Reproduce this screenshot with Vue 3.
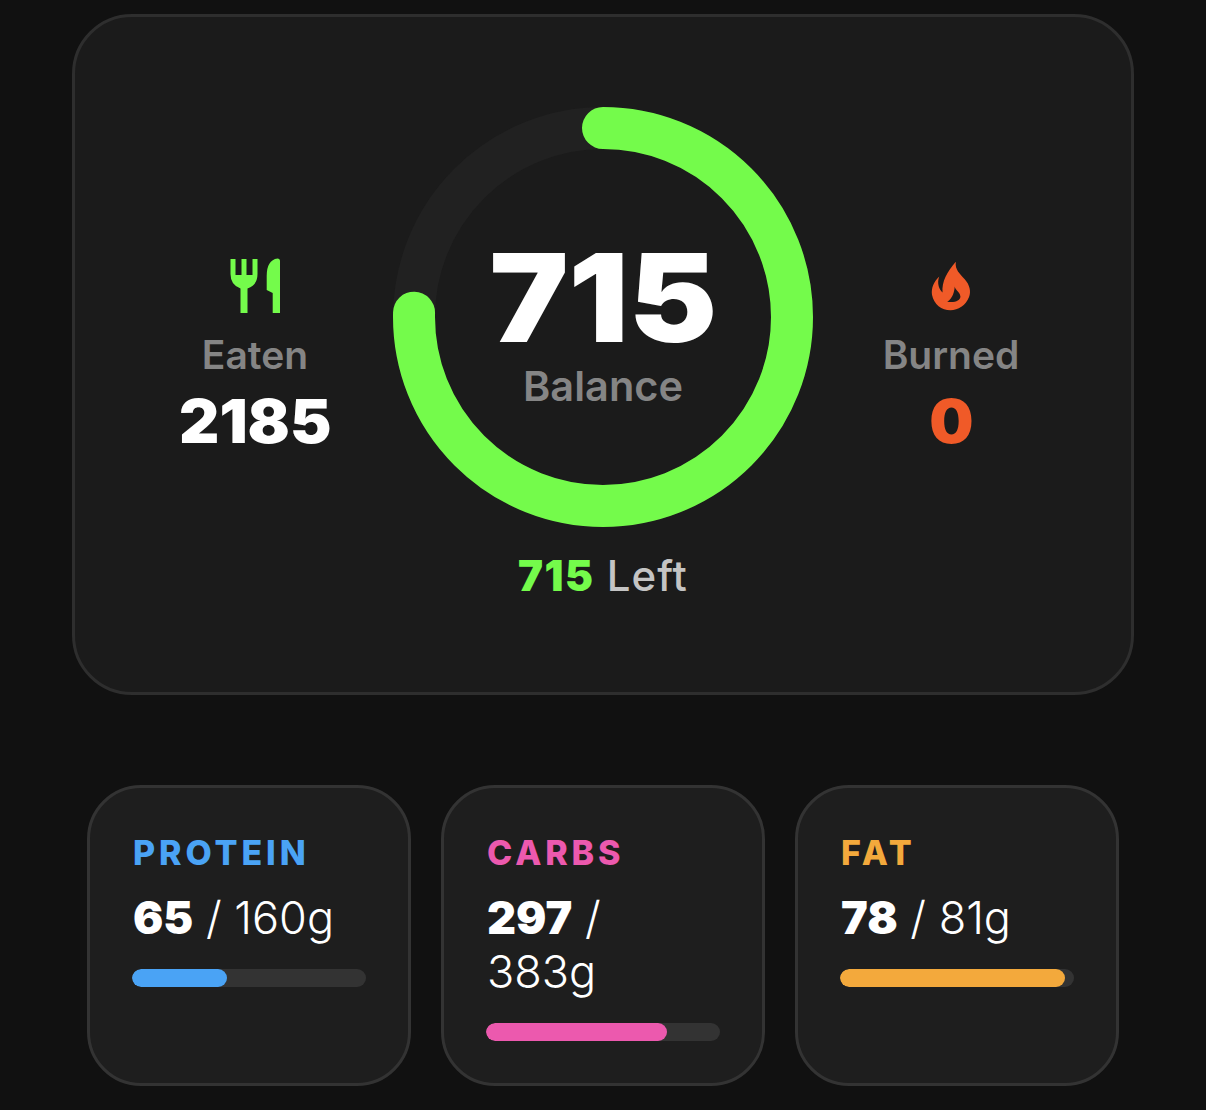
<template>
  <div class="page">
    <section class="summary">
      <div class="top-row">
        <div class="side">
          <div class="side-icon">
            <svg width="54" height="58" viewBox="228 257 54 58" fill="#74fb4b">
              <path d="M230.500 259H235.500V275H241.500V259H246.500V275H252.500V259H257.500V274Q257.500 285 247.500 288.500V313H240.500V288.500Q230.500 285 230.500 274Z" />
              <path d="M280 261Q280 258.500 277.500 258.500Q266.700 260 266.700 276V290L272.700 293V313H280Z" />
            </svg>
          </div>
          <div class="side-label">Eaten</div>
          <div class="side-value"><span>2185</span></div>
        </div>
        <div class="ring">
          <svg width="420" height="420" viewBox="0 0 420 420">
            <circle cx="210" cy="210" r="189" fill="none" stroke="#212121" stroke-width="42" />
            <circle
              cx="210" cy="210" r="189" fill="none" stroke="#74fb4b" stroke-width="42"
              stroke-linecap="round" transform="rotate(-90 210 210)"
              :stroke-dasharray="dash"
            />
          </svg>
          <div class="ring-text">
            <div class="balance"><span>715</span></div>
            <div class="balance-label">Balance</div>
          </div>
        </div>
        <div class="side">
          <div class="side-icon">
            <svg width="42" height="52" viewBox="210 60 127 157">
              <path fill="#f05a28" d="M288 65C285 90 300 100 315 118C330 135 335 155 328 172C318 198 295 212 272 212C245 212 222 195 216 165C213 145 222 125 238 110C230 130 238 150 248 158C245 125 262 95 288 65Z" />
              <path fill="#1b1b1b" d="M285 135C282 150 300 155 302 170C302 182 285 190 262 186C278 178 285 155 285 135Z" />
            </svg>
          </div>
          <div class="side-label">Burned</div>
          <div class="side-value burned"><span>0</span></div>
        </div>
      </div>
      <div class="left-line"><b>715</b> Left</div>
    </section>

    <section class="macros">
      <div v-for="m in macros" :key="m.name" class="macro">
        <div class="macro-name" :style="{ color: m.color }">{{ m.name }}</div>
        <div class="macro-value"><b>{{ m.value }}</b> / {{ m.goal }}g</div>
        <div class="bar">
          <div class="bar-fill" :style="{ width: (m.value / m.goal) * 100 + '%', background: m.color }"></div>
        </div>
      </div>
    </section>
  </div>
</template>

<script setup>
const circumference = 2 * Math.PI * 189
const dash = `${circumference * 0.7534} ${circumference}`

const macros = [
  { name: 'PROTEIN', value: 65, goal: 160, color: '#4aa3f5' },
  { name: 'CARBS', value: 297, goal: 383, color: '#ec59ae' },
  { name: 'FAT', value: 78, goal: 81, color: '#f3a93c' }
]
</script>

<style>
html,
body {
  background: #111111;
}
</style>

<style scoped>
.page {
  width: 1206px;
  height: 1110px;
  overflow: hidden;
  box-sizing: border-box;
  padding-top: 14px;
  background: #111111;
  font-family: Inter, "Liberation Sans", sans-serif;
  color: #fff;
}

.summary {
  box-sizing: border-box;
  width: 1062px;
  height: 681px;
  margin: 0 auto;
  padding: 90px 42px 0;
  background: #1b1b1b;
  border: 3px solid #2e2e2e;
  border-radius: 60px;
}

.top-row {
  display: flex;
  align-items: flex-start;
}

.side {
  flex: 1;
  display: flex;
  flex-direction: column;
  align-items: center;
  padding-top: 150px;
}

.side-icon {
  display: flex;
  align-items: center;
  justify-content: center;
  height: 58px;
}

.side-icon svg {
  display: block;
}

.side-label {
  margin-top: 18px;
  font-size: 39px;
  line-height: 44px;
  font-weight: 600;
  color: #858585;
}

.side-value {
  margin-top: 8px;
  font-size: 60px;
  line-height: 72px;
  font-weight: 900;
}

.side-value span {
  display: inline-block;
  transform: scaleX(1.04);
}

.burned {
  color: #f05a28;
}

.ring {
  position: relative;
  width: 420px;
  height: 420px;
}

.ring svg {
  display: block;
}

.ring-text {
  position: absolute;
  left: 0;
  right: 0;
  top: 129px;
  text-align: center;
}

.balance {
  font-size: 123px;
  line-height: 124px;
  font-weight: 900;
}

.balance span {
  display: inline-block;
  transform: scaleX(1.08);
}

.balance-label {
  margin-top: 1px;
  font-size: 41.5px;
  line-height: 50px;
  font-weight: 600;
  color: #858585;
}

.left-line {
  margin-top: 24px;
  text-align: center;
  font-size: 42px;
  line-height: 50px;
  font-weight: 500;
  letter-spacing: 1px;
  color: #c4c4c4;
}

.left-line b {
  font-weight: 900;
  letter-spacing: 1.5px;
  color: #74fb4b;
}

.macros {
  display: flex;
  justify-content: center;
  gap: 30px;
  margin-top: 90px;
}

.macro {
  box-sizing: border-box;
  width: 324px;
  height: 301px;
  padding: 45px 42px 0;
  background: #1e1e1e;
  border: 3px solid #333333;
  border-radius: 54px;
}

.macro-name {
  margin-left: 1px;
  font-size: 34px;
  line-height: 40px;
  font-weight: 800;
  letter-spacing: 3.9px;
}

.macro-value {
  margin-top: 18px;
  margin-left: 1px;
  font-size: 45px;
  line-height: 54px;
  font-weight: 300;
}

.macro-value b {
  font-weight: 900;
}

.bar {
  margin-top: 24px;
  height: 18px;
  border-radius: 9px;
  background: #333333;
  overflow: hidden;
}

.bar-fill {
  height: 100%;
  border-radius: 9px;
}
</style>
